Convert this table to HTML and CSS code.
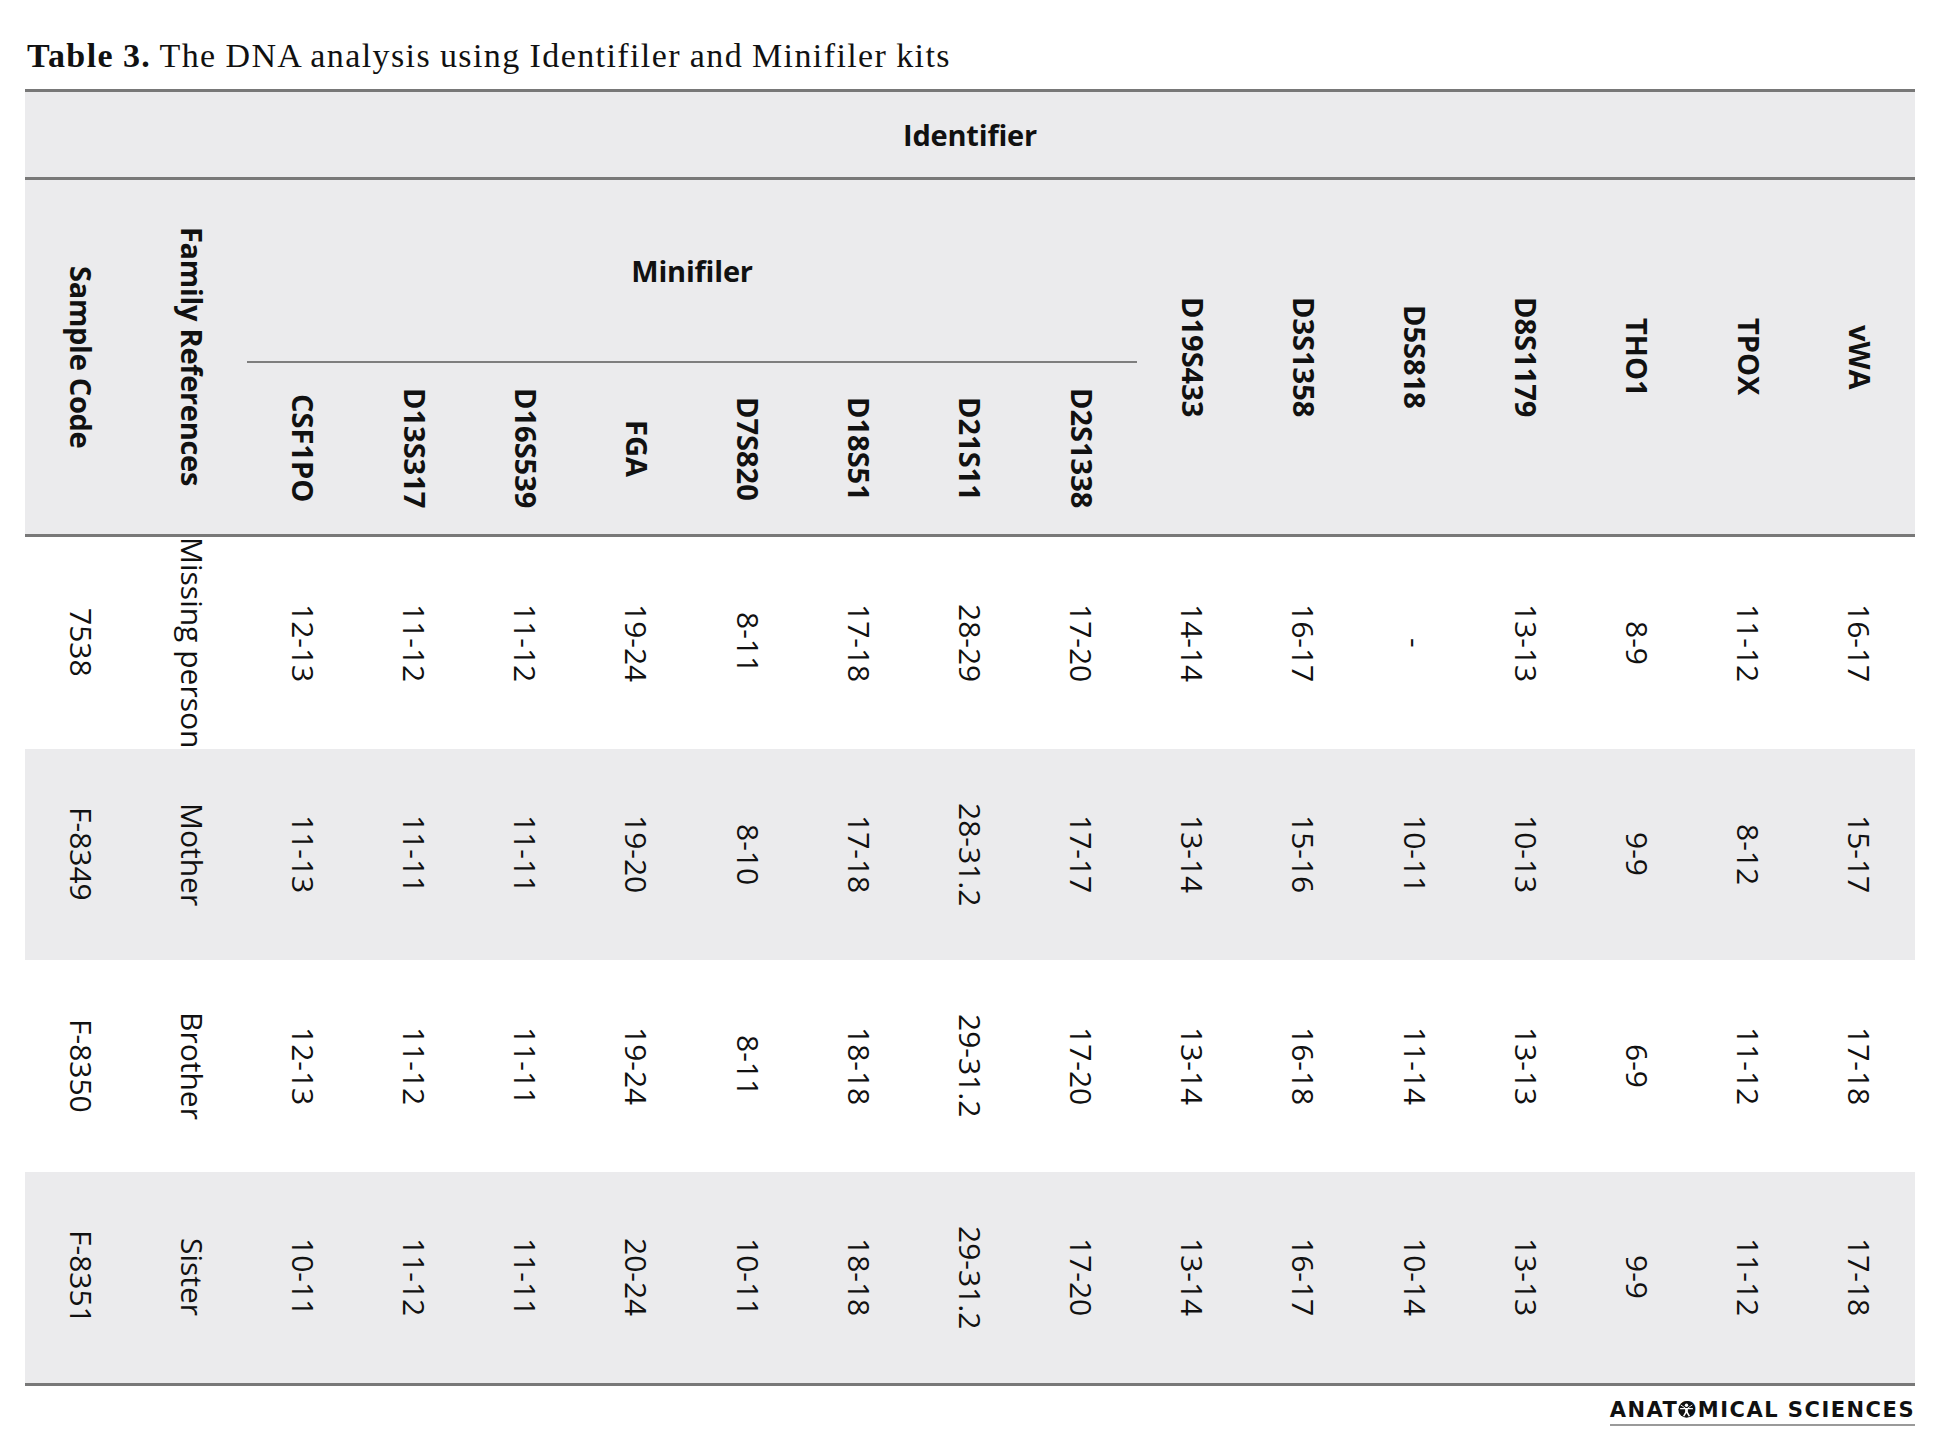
FILE: index.html
```html
<!DOCTYPE html>
<html lang="en">
<head>
<meta charset="utf-8">
<title>Table 3</title>
<link rel="stylesheet" href="styles.css">
</head>
<body>
<div class="page">
  <p class="caption"><b>Table 3.</b> The DNA analysis using Identifiler and Minifiler kits</p>
  <div class="table">
    <div class="thead">
      <div class="ident">Identifier</div>
      <div class="hrow">
        <div class="hcell semi"><span class="v">Sample Code</span></div>
        <div class="hcell semi"><span class="v">Family References</span></div>
        <div class="mini-group">
          <div class="mini-title">Minifiler</div>
          <div class="gene-row">
            <div class="gcell"><span class="v">CSF1PO</span></div>
            <div class="gcell"><span class="v">D13S317</span></div>
            <div class="gcell"><span class="v">D16S539</span></div>
            <div class="gcell"><span class="v">FGA</span></div>
            <div class="gcell"><span class="v">D7S820</span></div>
            <div class="gcell"><span class="v">D18S51</span></div>
            <div class="gcell"><span class="v">D21S11</span></div>
            <div class="gcell"><span class="v">D2S1338</span></div>
          </div>
        </div>
        <div class="hcell"><span class="v">D19S433</span></div>
        <div class="hcell"><span class="v">D3S1358</span></div>
        <div class="hcell"><span class="v">D5S818</span></div>
        <div class="hcell"><span class="v">D8S1179</span></div>
        <div class="hcell"><span class="v">THO1</span></div>
        <div class="hcell"><span class="v">TPOX</span></div>
        <div class="hcell"><span class="v">vWA</span></div>
      </div>
    </div>
    <div class="tbody">
      <div class="row">
        <div class="cell"><span class="v">7538</span></div>
        <div class="cell"><span class="v">Missing person</span></div>
        <div class="cell"><span class="v">12-13</span></div>
        <div class="cell"><span class="v">11-12</span></div>
        <div class="cell"><span class="v">11-12</span></div>
        <div class="cell"><span class="v">19-24</span></div>
        <div class="cell"><span class="v">8-11</span></div>
        <div class="cell"><span class="v">17-18</span></div>
        <div class="cell"><span class="v">28-29</span></div>
        <div class="cell"><span class="v">17-20</span></div>
        <div class="cell"><span class="v">14-14</span></div>
        <div class="cell"><span class="v">16-17</span></div>
        <div class="cell"><span class="v">-</span></div>
        <div class="cell"><span class="v">13-13</span></div>
        <div class="cell"><span class="v">8-9</span></div>
        <div class="cell"><span class="v">11-12</span></div>
        <div class="cell"><span class="v">16-17</span></div>
      </div>
      <div class="row shade">
        <div class="cell"><span class="v">F-8349</span></div>
        <div class="cell"><span class="v">Mother</span></div>
        <div class="cell"><span class="v">11-13</span></div>
        <div class="cell"><span class="v">11-11</span></div>
        <div class="cell"><span class="v">11-11</span></div>
        <div class="cell"><span class="v">19-20</span></div>
        <div class="cell"><span class="v">8-10</span></div>
        <div class="cell"><span class="v">17-18</span></div>
        <div class="cell"><span class="v">28-31.2</span></div>
        <div class="cell"><span class="v">17-17</span></div>
        <div class="cell"><span class="v">13-14</span></div>
        <div class="cell"><span class="v">15-16</span></div>
        <div class="cell"><span class="v">10-11</span></div>
        <div class="cell"><span class="v">10-13</span></div>
        <div class="cell"><span class="v">9-9</span></div>
        <div class="cell"><span class="v">8-12</span></div>
        <div class="cell"><span class="v">15-17</span></div>
      </div>
      <div class="row">
        <div class="cell"><span class="v">F-8350</span></div>
        <div class="cell"><span class="v">Brother</span></div>
        <div class="cell"><span class="v">12-13</span></div>
        <div class="cell"><span class="v">11-12</span></div>
        <div class="cell"><span class="v">11-11</span></div>
        <div class="cell"><span class="v">19-24</span></div>
        <div class="cell"><span class="v">8-11</span></div>
        <div class="cell"><span class="v">18-18</span></div>
        <div class="cell"><span class="v">29-31.2</span></div>
        <div class="cell"><span class="v">17-20</span></div>
        <div class="cell"><span class="v">13-14</span></div>
        <div class="cell"><span class="v">16-18</span></div>
        <div class="cell"><span class="v">11-14</span></div>
        <div class="cell"><span class="v">13-13</span></div>
        <div class="cell"><span class="v">6-9</span></div>
        <div class="cell"><span class="v">11-12</span></div>
        <div class="cell"><span class="v">17-18</span></div>
      </div>
      <div class="row shade">
        <div class="cell"><span class="v">F-8351</span></div>
        <div class="cell"><span class="v">Sister</span></div>
        <div class="cell"><span class="v">10-11</span></div>
        <div class="cell"><span class="v">11-12</span></div>
        <div class="cell"><span class="v">11-11</span></div>
        <div class="cell"><span class="v">20-24</span></div>
        <div class="cell"><span class="v">10-11</span></div>
        <div class="cell"><span class="v">18-18</span></div>
        <div class="cell"><span class="v">29-31.2</span></div>
        <div class="cell"><span class="v">17-20</span></div>
        <div class="cell"><span class="v">13-14</span></div>
        <div class="cell"><span class="v">16-17</span></div>
        <div class="cell"><span class="v">10-14</span></div>
        <div class="cell"><span class="v">13-13</span></div>
        <div class="cell"><span class="v">9-9</span></div>
        <div class="cell"><span class="v">11-12</span></div>
        <div class="cell"><span class="v">17-18</span></div>
      </div>
    </div>
  </div>
  <div class="footer">
    <div class="logo">ANAT<span class="logo-o">O<svg class="vitruvian" viewBox="0 0 20 20" aria-hidden="true"><circle cx="10" cy="10" r="9.6" fill="#111"/><circle cx="10" cy="5" r="2" fill="#fff"/><path d="M2.5 8.2 L17.5 8.2 L17.5 9.6 L11.6 9.8 L11.6 13 L14.2 17.6 L12.6 18.2 L10 14 L7.4 18.2 L5.8 17.6 L8.4 13 L8.4 9.8 L2.5 9.6 Z" fill="#fff"/><path d="M3.2 4.6 L8.6 8.4 M16.8 4.6 L11.4 8.4" stroke="#fff" stroke-width="1.1"/></svg></span>MICAL SCIENCES</div>
  </div>
</div>
</body>
</html>
```

FILE: styles.css
```css
html, body {
  margin: 0;
  padding: 0;
  background: #ffffff;
}

.page {
  width: 1890px;
  padding: 38px 0 0 25px;
  color: #111;
}

.caption {
  margin: 0 0 15px 2px;
  font-family: "Liberation Serif", "Times New Roman", serif;
  font-size: 34px;
  line-height: 36px;
  letter-spacing: 1.4px;
  word-spacing: -1px;
  color: #111;
}

.caption b {
  font-weight: 700;
}

.table {
  width: 1890px;
  font-family: "Open Sans", "Noto Sans", sans-serif;
  font-size: 30px;
  border-bottom: 3px solid #787878;
}

.thead {
  background: #ebebed;
  border-top: 3px solid #787878;
  border-bottom: 3px solid #787878;
}

.ident {
  height: 85px;
  border-bottom: 3px solid #787878;
  display: flex;
  align-items: center;
  justify-content: center;
  font-weight: 700;
  font-size: 29px;
  letter-spacing: -0.2px;
}

.hrow {
  display: flex;
  height: 354px;
}

.hcell {
  flex: 1 1 0;
  display: flex;
  align-items: center;
  justify-content: center;
  font-weight: 700;
  font-size: 29px;
}

.hcell.semi {
  font-weight: 700;
  letter-spacing: -0.3px;
}

.mini-group {
  flex: 8 8 0;
  display: flex;
  flex-direction: column;
}

.mini-title {
  height: 181px;
  border-bottom: 2px solid #7e7e7e;
  display: flex;
  align-items: center;
  justify-content: center;
  font-weight: 700;
  font-size: 29px;
  letter-spacing: -0.2px;
}

.gene-row {
  flex: 1 1 auto;
  display: flex;
}

.gcell {
  flex: 1 1 0;
  display: flex;
  align-items: center;
  justify-content: center;
  font-weight: 700;
  font-size: 29px;
}

.v {
  writing-mode: vertical-rl;
  white-space: nowrap;
  line-height: 1.2;
}

.row {
  display: flex;
  height: 211.5px;
  background: #ffffff;
}

.row.shade {
  background: #ebebed;
}

.cell {
  flex: 1 1 0;
  display: flex;
  align-items: center;
  justify-content: center;
  font-weight: 400;
  overflow: visible;
}

.footer {
  display: flex;
  justify-content: flex-end;
  padding-top: 13px;
}

.logo {
  font-family: "DejaVu Sans", "Liberation Sans", sans-serif;
  font-weight: 700;
  font-size: 21px;
  line-height: 22px;
  letter-spacing: 1.5px;
  color: #111;
  padding-bottom: 3px;
  border-bottom: 2px solid #9a9a9a;
}

.logo-o {
  position: relative;
  display: inline-block;
}

.vitruvian {
  position: absolute;
  left: 0;
  top: 2px;
  width: 17px;
  height: 17px;
}
```
